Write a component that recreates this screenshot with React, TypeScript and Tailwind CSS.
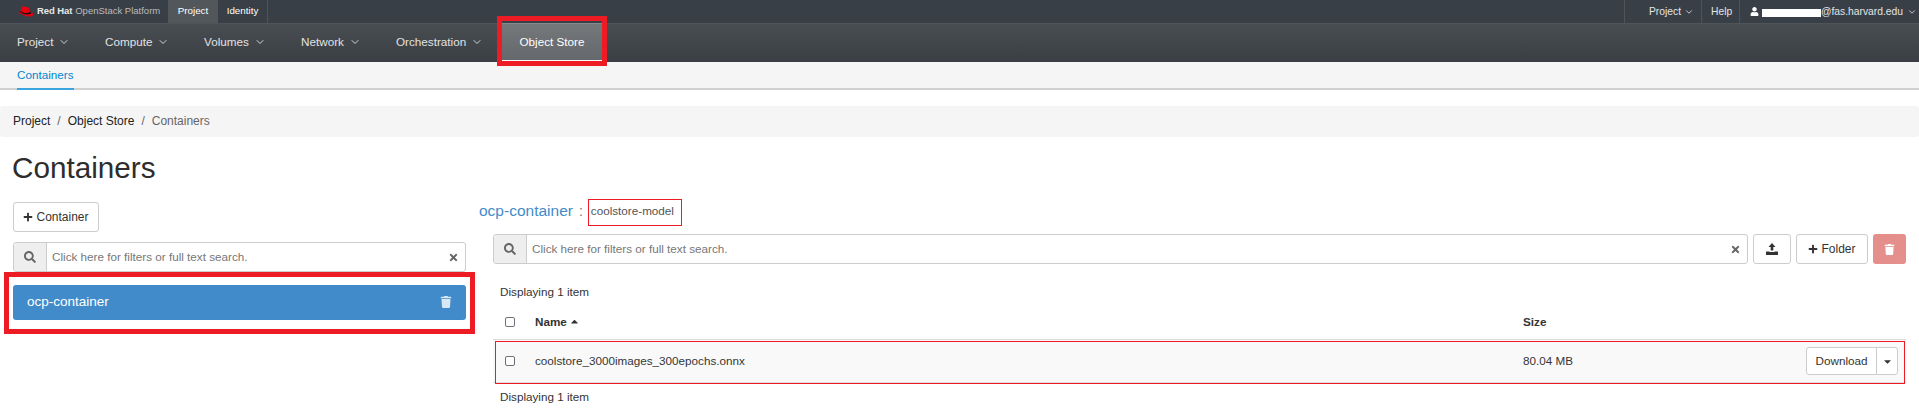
import React from "react";
import { FaSearch, FaTimes, FaTrash, FaPlus, FaUser, FaCaretDown, FaCaretUp } from "react-icons/fa";
import { FiChevronDown } from "react-icons/fi";

function Logo() {
  return (
    <svg width="17" height="12" viewBox="0 0 18 13" className="shrink-0">
      <path d="M5 1.200C6 .3 7.400.7 9 1c1.600.3 2.700-.2 3.400.8l2 4.200c1.400.7 3 1.600 3 3 0 1.800-2.600 2.900-5.400 2.400C8.700 10.900 4 9 2.300 7.600 1.500 7 1.300 6.300 2 5.800l1.500-.3z" fill="#e60012" />
      <path d="M3.300 5.400C6 7.500 10.500 9 14.400 6l.9 2C11 10.500 5.500 8.600 2.500 6.200z" fill="#161616" />
    </svg>
  );
}

function NavItem({ label, className }: { label: string; className: string }) {
  return (
    <div className={`flex items-center pb-[2px] text-[11.700px] text-[#e1e2e3] ${className}`}>
      <span>{label}</span>
      <FiChevronDown className="ml-[5px] text-[12px] text-[#d5d6d7]" />
    </div>
  );
}

function SearchBar({ className }: { className: string }) {
  return (
    <div className={`flex h-[30px] items-stretch rounded-[3px] border border-[#ccc] bg-white ${className}`}>
      <div className="flex w-[33px] shrink-0 items-center justify-center rounded-l-[3px] border-r border-[#ccc] bg-[#eee] text-[#666]">
        <FaSearch className="text-[12px]" />
      </div>
      <div className="flex flex-1 items-center pl-[5px] text-[11.700px] text-[#777]">Click here for filters or full text search.</div>
      <div className="flex w-[17px] items-center text-[#666]">
        <FaTimes className="text-[11px]" />
      </div>
    </div>
  );
}

function Check() {
  return <div className="h-[10px] w-[10px] rounded-[2px] border border-[#6f6f78] bg-white" />;
}

export default function App() {
  return (
    <div className="h-[419px] w-full overflow-hidden bg-white font-['Liberation_Sans',Arial,sans-serif] text-[#363636]">
      {/* Top bar */}
      <div className="flex h-[24px] items-stretch justify-between border-b border-[#4f5459] bg-[#393f46]">
        <div className="flex items-stretch">
          <div className="flex w-[168px] items-center pl-[17px]">
            <Logo />
            <span className="ml-[3px] text-[9.500px] font-bold tracking-[-0.1px] text-[#e8e8e8]">Red Hat</span>
            <span className="ml-[3px] text-[9.500px] text-[#b9bcbf]">OpenStack Platform</span>
          </div>
          <div className="flex w-[50px] items-center justify-center bg-[#52575c] text-[9.800px] text-white">Project</div>
          <div className="flex w-[50px] items-center justify-center border-r border-[#4f5459] text-[9.800px] text-white">Identity</div>
        </div>
        <div className="flex items-stretch text-[10.300px] text-[#e4e5e6]">
          <div className="flex w-[78px] items-center border-x border-[#4f5459] pl-[24px]">
            Project
            <FiChevronDown className="ml-[3px] text-[10px]" />
          </div>
          <div className="flex w-[38px] items-center border-r border-[#4f5459] pl-[9px]">Help</div>
          <div className="flex w-[179px] items-center pl-[10px]">
            <FaUser className="text-[9px] text-white" />
            <div className="ml-[3px] mt-[3px] h-[8px] w-[59px] bg-white" />
            <span>@fas.harvard.edu</span>
            <FiChevronDown className="ml-[4px] text-[10px]" />
          </div>
        </div>
      </div>

      {/* Main nav */}
      <div className="flex h-[38px] items-stretch bg-linear-to-b from-[#484d51] to-[#3b3f43]">
        <NavItem label="Project" className="ml-[17px] w-[88px]" />
        <NavItem label="Compute" className="w-[99px]" />
        <NavItem label="Volumes" className="w-[97px]" />
        <NavItem label="Network" className="w-[95px]" />
        <NavItem label="Orchestration" className="w-[106px]" />
        <div className="relative -mt-[1px] flex w-[100px] items-center justify-center border-t border-b-2 border-t-[#888c90] border-b-white bg-linear-to-b from-[#75787b] to-[#65686c] pb-[1px] text-[11.700px] text-white">
          Object Store
          <div className="absolute inset-x-[-5px] top-[-8px] bottom-[-6px] border-[5px] border-[#ed1c24]" />
        </div>
      </div>

      {/* Sub nav */}
      <div className="flex h-[28px] items-stretch border-b-2 border-[#d1d1d1] bg-[#f5f5f5] pl-[17px]">
        <div className="-mb-[2px] flex items-center border-b-2 border-[#39a5dc] pb-[1px] text-[11.700px] text-[#0088ce]">Containers</div>
      </div>

      {/* Breadcrumb */}
      <div className="mt-[16px] flex h-[31px] items-center rounded-[3px] bg-[#f5f5f5] pb-[1px] pl-[13px] text-[12px]">
        <span className="text-[#222]">Project</span>
        <span className="px-[7px] text-[#666]">/</span>
        <span className="text-[#222]">Object Store</span>
        <span className="px-[7px] text-[#666]">/</span>
        <span className="text-[#666]">Containers</span>
      </div>

      {/* Title */}
      <div className="h-[62px] pl-[12px] pt-[14px] text-[29.700px] leading-[33px] text-[#2d2d2d]">Containers</div>

      {/* Content */}
      <div className="flex">
        {/* Left */}
        <div className="ml-[13px] w-[453px] pt-[3px]">
          <div className="flex h-[30px] w-[86px] items-center justify-center rounded-[3px] border border-[#ccc] bg-white text-[12px] text-[#333]">
            <FaPlus className="mr-[3px] text-[10px]" />
            Container
          </div>
          <SearchBar className="mt-[10px] w-full" />
          <div className="relative mt-[13px] flex h-[35px] items-center justify-between rounded-[3px] bg-[#428bca] pb-[1px] pl-[14px] pr-[14px] text-[13.500px] text-white">
            ocp-container
            <FaTrash className="text-[12px] text-[#d8e8f5]" />
            <div className="absolute inset-x-[-9px] top-[-13px] bottom-[-14px] border-[5px] border-[#ed1c24]" />
          </div>
        </div>

        {/* Right */}
        <div className="ml-[13px] flex-1">
          <div className="flex h-[27px] items-center">
            <span className="pb-[3px] text-[15.500px] text-[#428bca]">ocp-container</span>
            <span className="ml-[6px] pb-[3px] text-[14px] text-[#777]">:</span>
            <div className="ml-[5px] flex h-[27px] w-[94px] items-center border border-[#ed1c24] pb-[3px] pl-[2px] text-[11.700px] text-[#555]">coolstore-model</div>
          </div>

          <div className="ml-[14px] mr-[13px]">
            <div className="mt-[8px] flex items-stretch gap-[5px]">
              <SearchBar className="flex-1" />
              <div className="flex w-[38px] items-center justify-center rounded-[3px] border border-[#ccc] bg-white text-[#333]">
                <svg width="12" height="12" viewBox="0 0 12 12" fill="currentColor">
                  <path d="M6 0 9.500 4H7.300v3.500H4.700V4H2.500z" />
                  <path d="M0 8.500h3.500v.6h5v-.6H12V12H0z" />
                </svg>
              </div>
              <div className="flex w-[72px] items-center justify-center rounded-[3px] border border-[#ccc] bg-white text-[12px] text-[#333]">
                <FaPlus className="mr-[3px] text-[10px]" />
                Folder
              </div>
              <div className="flex w-[33px] items-center justify-center rounded-[3px] bg-[#e58f8d] text-white">
                <FaTrash className="text-[11px]" />
              </div>
            </div>

            <div className="mt-[19px] h-[17px] pl-[7px] text-[11.700px] leading-[17px] text-[#333]">Displaying 1 item</div>

            <div className="flex h-[40px] items-center border-b border-[#ddd] pt-[4px] text-[11.700px] font-bold text-[#333]">
              <div className="w-[42px] pl-[12px]">
                <Check />
              </div>
              <div className="flex w-[988px] items-center">
                Name
                <FaCaretUp className="ml-[2px] text-[11px]" />
              </div>
              <div>Size</div>
            </div>

            <div className="relative flex h-[43px] items-center border-b border-[#ddd] bg-[#f9f9f9] text-[11.700px] text-[#363636]">
              <div className="w-[42px] pl-[12px]">
                <Check />
              </div>
              <div className="w-[988px]">coolstore_3000images_300epochs.onnx</div>
              <div>80.04 MB</div>
              <div className="ml-auto mr-[8px] flex h-[28px] rounded-[3px] border border-[#ccc] bg-white text-[#333]">
                <div className="flex w-[70px] items-center justify-center border-r border-[#ccc]">Download</div>
                <div className="flex w-[20px] items-center justify-center">
                  <FaCaretDown className="text-[11px]" />
                </div>
              </div>
              <div className="absolute left-[2px] right-[1px] top-[1px] -bottom-[2px] border border-[#ed1c24]" />
            </div>

            <div className="mt-[5px] h-[17px] pl-[7px] text-[11.700px] leading-[17px] text-[#333]">Displaying 1 item</div>
          </div>
        </div>
      </div>
    </div>
  );
}
